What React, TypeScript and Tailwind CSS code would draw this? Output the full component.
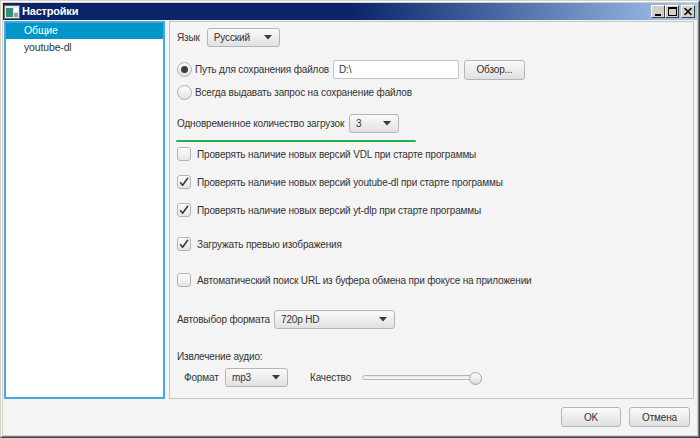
const font = { fontFamily: '"Liberation Sans", Arial, sans-serif' };

function Check({ checked }: { checked?: boolean }) {
  return (
    <span className="w-[14px] h-[14px] shrink-0 rounded-[3px] border border-[#b3b3b3] bg-gradient-to-b from-[#fdfdfd] to-[#e6e6e6] flex items-center justify-center">
      {checked && (
        <svg width="12" height="12" viewBox="0 0 12 12">
          <path d="M2.2 6.2 L4.6 9.2 L10 1.8" fill="none" stroke="#3a3a3a" strokeWidth="1.6" strokeLinejoin="round" />
        </svg>
      )}
    </span>
  );
}

function Radio({ checked }: { checked?: boolean }) {
  return (
    <span className="w-[15px] h-[15px] shrink-0 rounded-full border border-[#b0b0b0] bg-gradient-to-b from-[#fdfdfd] to-[#e2e2e2] flex items-center justify-center">
      {checked && <span className="w-[7px] h-[7px] rounded-full bg-[#3d3d3d]" />}
    </span>
  );
}

function Combo({ value, width }: { value: string; width: string }) {
  return (
    <div
      className={`${width} h-[19px] shrink-0 rounded-[3px] border border-[#b5b5b5] bg-gradient-to-b from-[#fafafa] to-[#e1e1e1] flex items-center pl-[6px] pr-[7px] text-[#333]`}
    >
      <span className="flex-1">{value}</span>
      <svg width="8" height="5" viewBox="0 0 8 5">
        <path d="M0 0 H8 L4 4.5 Z" fill="#3a3a3a" />
      </svg>
    </div>
  );
}

function Btn({ label, width }: { label: string; width: string }) {
  return (
    <div
      className={`${width} h-[20px] shrink-0 rounded-[3px] border border-[#b5b5b5] bg-gradient-to-b from-[#fafafa] to-[#e0e0e0] flex items-center justify-center text-[#333]`}
    >
      {label}
    </div>
  );
}

function CheckRow({ label, checked, mt }: { label: string; checked?: boolean; mt: string }) {
  return (
    <div className={`${mt} h-[14px] flex items-center gap-[6px]`}>
      <Check checked={checked} />
      <span>{label}</span>
    </div>
  );
}

function TitleButton({ children }: { children: React.ReactNode }) {
  return (
    <div className="w-[14px] h-[13px] bg-[#d4d0c8] border-t border-l border-white border-r border-b border-r-[#404040] border-b-[#404040] flex items-center justify-center">
      {children}
    </div>
  );
}

export default function App() {
  return (
    <div
      className="w-[700px] h-[438px] bg-[#d4d0c8] border border-[#d4d0c8] border-r-[#404040] border-b-[#404040] text-[10px] tracking-[-0.15px] text-[#333] whitespace-nowrap"
      style={font}
    >
      <div className="w-full h-full border border-white border-r-[#808080] border-b-[#808080] p-[1px] flex flex-col">
        {/* title bar */}
        <div className="h-[17px] shrink-0 bg-gradient-to-r from-[#0a246a] via-[#0a246a] to-[#a6caf0] flex items-center pl-[1px] pr-[2px]">
          <svg width="16" height="14" viewBox="0 0 16 14" className="shrink-0">
            <rect x="0.5" y="0.5" width="15" height="13" fill="#e8e8e8" stroke="#6a6a6a" />
            <rect x="2" y="3" width="7" height="9" fill="#2f8f7a" />
            <rect x="10" y="3" width="4" height="4" fill="#ffffff" />
            <rect x="10" y="8" width="4" height="4" fill="#9a9a9a" />
          </svg>
          <span className="ml-[2px] text-white font-bold text-[11px] tracking-[-0.2px]">Настройки</span>
          <div className="flex-1" />
          <div className="flex items-center">
            <TitleButton>
              <svg width="8" height="8" viewBox="0 0 8 8">
                <rect x="1" y="6" width="6" height="2" fill="#000" />
              </svg>
            </TitleButton>
            <TitleButton>
              <svg width="9" height="9" viewBox="0 0 9 9">
                <rect x="0.5" y="0.5" width="8" height="8" fill="none" stroke="#000" />
                <rect x="0" y="0" width="9" height="2" fill="#000" />
              </svg>
            </TitleButton>
            <div className="w-[2px]" />
            <TitleButton>
              <svg width="8" height="7" viewBox="0 0 8 7">
                <path d="M0.5 0 L7.5 7 M7.5 0 L0.5 7" stroke="#000" strokeWidth="1.5" />
              </svg>
            </TitleButton>
          </div>
        </div>

        {/* body */}
        <div className="flex-1 bg-[#f4f4f4] flex flex-col">
          <div className="flex pt-[1px] pl-[1px] gap-[4px] h-[379px]">
            {/* list */}
            <div className="w-[161px] h-[378px] bg-white border-2 border-[#4aa7d9] flex flex-col text-[10.5px]">
              <div className="h-[16px] bg-[#0096c9] text-white pl-[18px] flex items-center">Общие</div>
              <div className="h-[17px] pl-[18px] flex items-center">youtube-dl</div>
            </div>

            {/* settings panel */}
            <div className="w-[525px] h-[378px] border border-[#c4c4c4] bg-[#f4f4f4] pl-[7px] flex flex-col">
              <div className="mt-[6px] h-[19px] flex items-center gap-[7px]">
                <span>Язык</span>
                <Combo value="Русский" width="w-[73px]" />
              </div>

              <div className="mt-[13px] h-[19px] flex items-center">
                <Radio checked />
                <span className="ml-[3px] w-[138px]">Путь для сохранения файлов</span>
                <div className="w-[126px] h-[19px] rounded-[2px] border border-[#c4c4c4] bg-white flex items-center pl-[5px]">
                  D:\
                </div>
                <div className="ml-[5px]">
                  <Btn label="Обзор..." width="w-[61px]" />
                </div>
              </div>

              <div className="mt-[4px] h-[18px] flex items-center">
                <Radio />
                <span className="ml-[3px]">Всегда выдавать запрос на сохранение файлов</span>
              </div>

              <div className="mt-[13px] h-[19px] flex items-center">
                <span className="w-[172px]">Одновременное количество загрузок</span>
                <Combo value="3" width="w-[50px]" />
              </div>

              <div className="mt-[7px] -ml-[1px] w-[240px] h-[2px] rounded-full bg-[#22b14c]" />

              <CheckRow mt="mt-[5px]" label="Проверять наличие новых версий VDL при старте программы" />
              <CheckRow mt="mt-[14px]" checked label="Проверять наличие новых версий youtube-dl при старте программы" />
              <CheckRow mt="mt-[14px]" checked label="Проверять наличие новых версий yt-dlp при старте программы" />
              <CheckRow mt="mt-[20px]" checked label="Загружать превью изображения" />
              <CheckRow mt="mt-[22px]" label="Автоматический поиск URL из буфера обмена при фокусе на приложении" />

              <div className="mt-[23px] h-[19px] flex items-center">
                <span className="w-[97px]">Автовыбор формата</span>
                <Combo value="720p HD" width="w-[121px]" />
              </div>

              <div className="mt-[19px] h-[16px] flex items-center">Извлечение аудио:</div>

              <div className="mt-[4px] h-[19px] flex items-center pl-[7px]">
                <span className="w-[41px]">Формат</span>
                <Combo value="mp3" width="w-[63px]" />
                <span className="ml-[22px] w-[52px]">Качество</span>
                <div className="relative w-[120px] h-[12px] flex items-center">
                  <div className="w-[112px] h-[5px] rounded-full border border-[#b5b5b5] bg-gradient-to-b from-[#e6e6e6] to-[#fafafa]" />
                  <div className="absolute left-[107px] top-0 w-[13px] h-[13px] rounded-full border border-[#a5a5a5] bg-gradient-to-b from-[#fdfdfd] to-[#dcdcdc]" />
                </div>
              </div>
            </div>
          </div>

          {/* bottom buttons */}
          <div className="flex-1 flex items-center justify-end gap-[8px] pr-[7px]">
            <Btn label="OK" width="w-[60px]" />
            <Btn label="Отмена" width="w-[61px]" />
          </div>
        </div>
      </div>
    </div>
  );
}
